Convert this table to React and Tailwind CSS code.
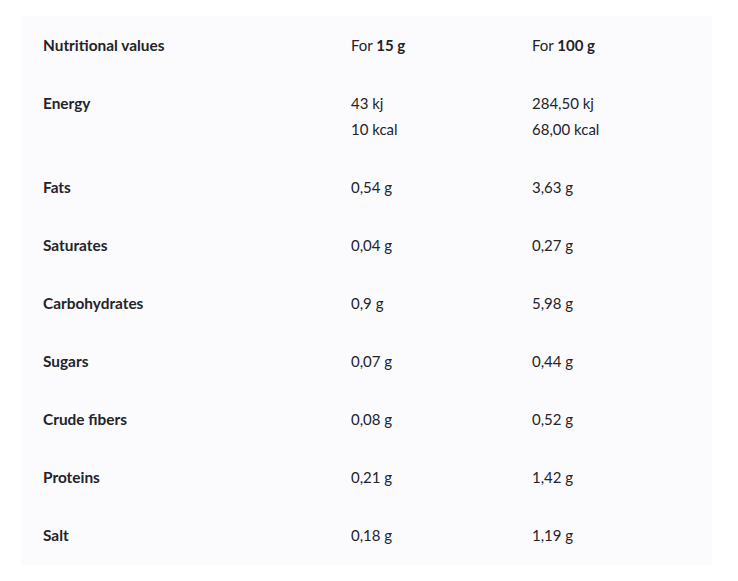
import React from 'react';

const rows = [
  { label: 'Energy', per15: ['43 kj', '10 kcal'], per100: ['284,50 kj', '68,00 kcal'] },
  { label: 'Fats', per15: ['0,54 g'], per100: ['3,63 g'] },
  { label: 'Saturates', per15: ['0,04 g'], per100: ['0,27 g'] },
  { label: 'Carbohydrates', per15: ['0,9 g'], per100: ['5,98 g'] },
  { label: 'Sugars', per15: ['0,07 g'], per100: ['0,44 g'] },
  { label: 'Crude fibers', per15: ['0,08 g'], per100: ['0,52 g'] },
  { label: 'Proteins', per15: ['0,21 g'], per100: ['1,42 g'] },
  { label: 'Salt', per15: ['0,18 g'], per100: ['1,19 g'] },
];

const Cell = ({ lines }) => (
  <div className="py-4 pl-[22px]">
    {lines.map((l) => (
      <div key={l} className="leading-[26px]">{l}</div>
    ))}
  </div>
);

export default function App() {
  return (
    <div className="min-h-[581px] bg-white pt-4 pl-[21px] font-['Lato','Liberation_Sans',sans-serif] text-[15px] text-[#23232b]">
      <div className="w-[691px] bg-[#fbfbfd] pb-px">
        {/* Header */}
        <div className="grid grid-cols-[308px_181px_1fr]">
          <div className="py-4 pl-[22px] text-[15.4px] font-bold leading-[26px]">Nutritional values</div>
          <div className="py-4 pl-[22px] leading-[26px]">For <span className="font-bold">15 g</span></div>
          <div className="py-4 pl-[22px] leading-[26px]">For <span className="font-bold">100 g</span></div>
        </div>

        {rows.map((r) => (
          <div key={r.label} className="grid grid-cols-[308px_181px_1fr]">
            <div className="py-4 pl-[22px] text-[15.4px] font-bold leading-[26px]">{r.label}</div>
            <Cell lines={r.per15} />
            <Cell lines={r.per100} />
          </div>
        ))}
      </div>
    </div>
  );
}
